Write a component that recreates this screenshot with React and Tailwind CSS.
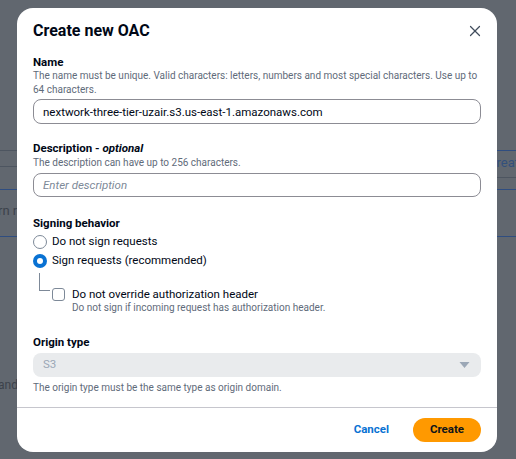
import React, { useState } from 'react';
import { X } from 'lucide-react';

const font = { fontFamily: 'Roboto, "Noto Sans", Arial, sans-serif' };

function Radio({ checked, label, onClick }) {
  return (
    <label className="flex items-center h-[19px] cursor-pointer" onClick={onClick}>
      <span
        className={`w-[14px] h-[14px] rounded-full flex items-center justify-center shrink-0 ${
          checked ? 'bg-[#0972d3]' : 'border-[1.5px] border-[#7d8998] bg-white'
        }`}
      >
        {checked && <span className="w-[6px] h-[6px] rounded-full bg-white" />}
      </span>
      <span className="ml-[5px] text-[11.5px] text-[#000716]">{label}</span>
    </label>
  );
}

export default function App() {
  const [signing, setSigning] = useState('sign');
  const [override, setOverride] = useState(false);

  return (
    <div className="relative w-full h-[459px] overflow-hidden bg-[#61676f]" style={font}>
      {/* page behind the overlay */}
      <div className="pt-[150px]">
        <div className="h-px flex">
          <div className="flex-1 bg-[#4d5560]" />
          <div className="w-[30px] bg-[#2f4d80]" />
        </div>
        <div className="h-[15px] flex">
          <div className="flex-1" />
          <span className="text-[13px] leading-[15px] text-[#33507c] mr-[-3px] mt-[4px]">Creat</span>
        </div>
        <div className="h-px flex">
          <div className="flex-1 bg-[#4d5560]" />
          <div className="w-[30px]" />
        </div>
        <div className="h-[10px]" />
        <div className="h-px flex">
          <div className="flex-1" />
          <div className="w-[30px] bg-[#4d5560]" />
        </div>
        <div className="h-[11px]" />
        <div className="h-px bg-[#2f4d80]" />
        <div className="h-[28px] flex items-end">
          <span className="text-[13px] leading-[15px] text-[#3c424b] ml-[-2px]">rn r</span>
        </div>
        <div className="h-[18px]" />
        <div className="h-px bg-[#2f4d80]" />
        <div className="h-[135px]" />
        <span className="text-[12px] text-[#3c424b] ml-[-2px]">and</span>
      </div>

      {/* modal */}
      <div className="absolute inset-0 pt-[8px] pl-[17px]">
        <div className="w-[480px] h-[444px] bg-white rounded-[16px] flex flex-col">
          <div className="px-4 pt-[12px] flex items-center justify-between">
            <h1 className="text-[16px] leading-[22px] font-bold text-[#000716]">Create new OAC</h1>
            <button className="text-[#414d5c] -mr-[3px]">
              <X className="w-[18px] h-[18px]" strokeWidth={1.6} />
            </button>
          </div>

          <div className="px-4 flex-1">
            {/* Name */}
            <div className="mt-[13px]">
              <div className="text-[11.5px] leading-[14px] font-bold text-[#000716]">Name</div>
              <p className="text-[10px] leading-[14px] text-[#5f6b7a]">
                The name must be unique. Valid characters: letters, numbers and most special characters. Use up to 64 characters.
              </p>
              <input
                className="mt-[2px] w-full h-[25px] rounded-[8px] border border-[#8c8c94] px-[9px] text-[11.5px] text-[#000716] outline-none"
                defaultValue="nextwork-three-tier-uzair.s3.us-east-1.amazonaws.com"
                style={font}
              />
            </div>

            {/* Description */}
            <div className="mt-[17px]">
              <div className="text-[11.5px] leading-[14px] font-bold text-[#000716]">
                Description - <i>optional</i>
              </div>
              <p className="mt-[1px] text-[10px] leading-[14px] text-[#5f6b7a]">The description can have up to 256 characters.</p>
              <input
                className="mt-[3px] w-full h-[24px] rounded-[8px] border border-[#8c8c94] px-[9px] text-[11.5px] text-[#000716] placeholder:italic placeholder:text-[#7d8998] outline-none"
                placeholder="Enter description"
                style={font}
              />
            </div>

            {/* Signing behavior */}
            <div className="mt-[19px]">
              <div className="text-[11.5px] leading-[14px] font-bold text-[#000716]">Signing behavior</div>
              <div className="mt-[2px]">
                <Radio checked={signing === 'none'} label="Do not sign requests" onClick={() => setSigning('none')} />
                <Radio checked={signing === 'sign'} label="Sign requests (recommended)" onClick={() => setSigning('sign')} />
              </div>
              <div className="flex">
                <div className="ml-[6px] mt-[3px] w-[11px] h-[18px] border-l border-b border-[#7d8998] shrink-0" />
                <div className="ml-[2px] mt-[18px] flex items-start">
                  <span
                    onClick={() => setOverride(!override)}
                    className="w-[13px] h-[13px] rounded-[3px] border-[1.5px] border-[#7d8998] bg-white shrink-0 cursor-pointer"
                  />
                  <div className="ml-[7px] -mt-[1px]">
                    <div className="text-[11.5px] leading-[14px] text-[#000716]">Do not override authorization header</div>
                    <div className="text-[10px] leading-[14px] text-[#5f6b7a]">Do not sign if incoming request has authorization header.</div>
                  </div>
                </div>
              </div>
            </div>

            {/* Origin type */}
            <div className="mt-[20px]">
              <div className="text-[11.5px] leading-[14px] font-bold text-[#000716]">Origin type</div>
              <div className="mt-[4px] w-full h-[24px] rounded-[8px] bg-[#e9ebed] flex items-center justify-between px-[10px]">
                <span className="text-[11.5px] text-[#9ba7b6]">S3</span>
                <svg width="11" height="8" viewBox="0 0 11 8" className="mr-[1px]">
                  <path d="M0.5 1 L10.5 1 L5.5 7 Z" fill="#9ba7b6" />
                </svg>
              </div>
              <p className="mt-[4px] text-[10px] leading-[14px] text-[#5f6b7a]">The origin type must be the same type as origin domain.</p>
            </div>
          </div>

          <div className="h-px bg-[#c6c6cd] mb-[10px]" />
          <div className="px-4 pb-[10px] flex items-center justify-end gap-[24px]">
            <button className="text-[11.5px] font-bold text-[#0972d3]">Cancel</button>
            <button className="h-[24px] w-[68px] rounded-full bg-[#ff9900] text-[11.5px] font-bold text-[#0f141a]">Create</button>
          </div>
        </div>
      </div>
    </div>
  );
}
